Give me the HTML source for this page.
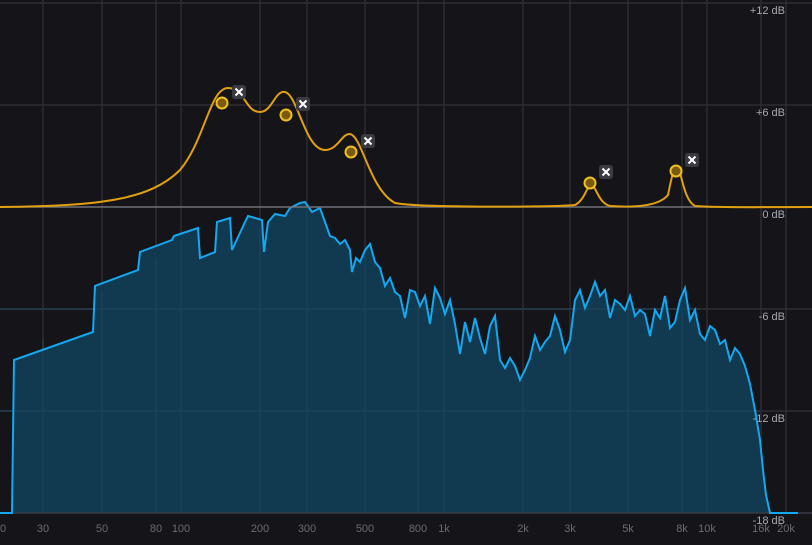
<!DOCTYPE html>
<html><head><style>
html,body{margin:0;padding:0;background:#141419;width:812px;height:545px;overflow:hidden}
svg{display:block}
text{font-family:"Liberation Sans",sans-serif;font-size:11px;fill:#6a6a72}
</style></head><body>
<svg width="812" height="545" viewBox="0 0 812 545">
<rect width="812" height="545" fill="#141419"/>
<g stroke="#2c2c33" stroke-width="1.5">
<line x1="43" y1="0" x2="43" y2="513"/><line x1="102" y1="0" x2="102" y2="513"/><line x1="156" y1="0" x2="156" y2="513"/><line x1="181" y1="0" x2="181" y2="513"/><line x1="260" y1="0" x2="260" y2="513"/><line x1="307" y1="0" x2="307" y2="513"/><line x1="365" y1="0" x2="365" y2="513"/><line x1="418" y1="0" x2="418" y2="513"/><line x1="444" y1="0" x2="444" y2="513"/><line x1="523" y1="0" x2="523" y2="513"/><line x1="570" y1="0" x2="570" y2="513"/><line x1="628" y1="0" x2="628" y2="513"/><line x1="682" y1="0" x2="682" y2="513"/><line x1="707" y1="0" x2="707" y2="513"/><line x1="761" y1="0" x2="761" y2="513"/><line x1="786" y1="0" x2="786" y2="513"/>
<line x1="0" y1="3" x2="812" y2="3"/><line x1="0" y1="105" x2="812" y2="105"/><line x1="0" y1="309" x2="812" y2="309"/><line x1="0" y1="411" x2="812" y2="411"/>
</g>
<path d="M0,513 L12,513 L14,360 L93,332 L95,286 L138,270 L140,252 L172,240 L174,236 L198,228 L200,258 L215,252 L217,222 L230,218 L232,250 L245,222 L248,216 L262,220 L264,252 L268,222 L275,214 L285,216 L290,208 L300,203 L305,202 L312,212 L320,208 L325,222 L330,236 L335,238 L340,244 L345,240 L350,250 L352,272 L356,258 L360,262 L365,250 L370,244 L375,262 L380,268 L385,286 L390,278 L395,292 L400,296 L405,318 L410,290 L415,292 L420,306 L425,296 L430,324 L435,288 L440,298 L445,314 L450,300 L455,324 L460,354 L465,322 L470,342 L475,318 L480,338 L485,354 L490,326 L495,316 L500,360 L505,368 L510,358 L515,366 L520,380 L525,370 L530,358 L535,336 L540,350 L545,342 L550,336 L555,316 L560,330 L565,352 L570,340 L575,300 L580,290 L585,308 L590,296 L595,282 L600,296 L605,290 L610,318 L615,300 L620,304 L625,310 L630,296 L635,316 L640,310 L645,314 L650,336 L655,310 L660,318 L665,296 L670,328 L675,322 L680,300 L685,288 L690,320 L695,310 L700,334 L705,340 L710,326 L715,330 L720,344 L725,340 L730,360 L735,348 L740,354 L745,366 L750,384 L755,410 L760,440 L763,470 L766,495 L770,513 L786,513 Z" fill="#113a50" stroke="none"/>
<g stroke="#1f4a60" stroke-width="1.5" opacity="0.6">
<line x1="43" y1="340" x2="43" y2="513"/><line x1="102" y1="290" x2="102" y2="513"/><line x1="156" y1="260" x2="156" y2="513"/><line x1="181" y1="240" x2="181" y2="513"/><line x1="260" y1="230" x2="260" y2="513"/><line x1="307" y1="210" x2="307" y2="513"/><line x1="365" y1="250" x2="365" y2="513"/><line x1="418" y1="300" x2="418" y2="513"/><line x1="444" y1="300" x2="444" y2="513"/><line x1="523" y1="380" x2="523" y2="513"/><line x1="570" y1="340" x2="570" y2="513"/><line x1="628" y1="310" x2="628" y2="513"/><line x1="682" y1="310" x2="682" y2="513"/><line x1="707" y1="340" x2="707" y2="513"/><line x1="0" y1="411" x2="760" y2="411"/><line x1="0" y1="309" x2="700" y2="309"/>
</g>
<line x1="0" y1="513" x2="812" y2="513" stroke="#3a3a42" stroke-width="1.5"/>
<path d="M0,513 L12,513 L14,360 L93,332 L95,286 L138,270 L140,252 L172,240 L174,236 L198,228 L200,258 L215,252 L217,222 L230,218 L232,250 L245,222 L248,216 L262,220 L264,252 L268,222 L275,214 L285,216 L290,208 L300,203 L305,202 L312,212 L320,208 L325,222 L330,236 L335,238 L340,244 L345,240 L350,250 L352,272 L356,258 L360,262 L365,250 L370,244 L375,262 L380,268 L385,286 L390,278 L395,292 L400,296 L405,318 L410,290 L415,292 L420,306 L425,296 L430,324 L435,288 L440,298 L445,314 L450,300 L455,324 L460,354 L465,322 L470,342 L475,318 L480,338 L485,354 L490,326 L495,316 L500,360 L505,368 L510,358 L515,366 L520,380 L525,370 L530,358 L535,336 L540,350 L545,342 L550,336 L555,316 L560,330 L565,352 L570,340 L575,300 L580,290 L585,308 L590,296 L595,282 L600,296 L605,290 L610,318 L615,300 L620,304 L625,310 L630,296 L635,316 L640,310 L645,314 L650,336 L655,310 L660,318 L665,296 L670,328 L675,322 L680,300 L685,288 L690,320 L695,310 L700,334 L705,340 L710,326 L715,330 L720,344 L725,340 L730,360 L735,348 L740,354 L745,366 L750,384 L755,410 L760,440 L763,470 L766,495 L770,513 L798,513" fill="none" stroke="#14a8f0" stroke-width="2"/>
<line x1="0" y1="207" x2="812" y2="207" stroke="#707078" stroke-width="1.5"/>
<path d="M0,207 C100,206 150,200 180,170 C205,140 210,88 228,88 C245,88 245,112 260,112 C272,112 275,90 285,92 C298,95 305,150 325,150 C338,150 342,133 350,134 C362,136 370,190 395,203 C420,208 560,207 575,205 C585,200 587,185 591,185 C596,185 598,203 610,206 C640,208 660,205 668,195 C672,175 674,167 677,167 C681,167 683,200 695,206 C720,208 760,207 812,207" fill="none" stroke="#e0a010" stroke-width="2"/>
<g fill="#7a5a10" stroke="#f0c020" stroke-width="2">
<circle cx="222" cy="103" r="5.5"/><circle cx="286" cy="115" r="5.5"/><circle cx="351" cy="152" r="5.5"/><circle cx="590" cy="183" r="5.5"/><circle cx="676" cy="171" r="5.5"/>
</g>
<g>
<g transform="translate(239,92)"><rect x="-7" y="-7" width="14" height="14" rx="3" fill="#3a3a42"/><path d="M-3.5,-3.5L3.5,3.5M3.5,-3.5L-3.5,3.5" stroke="#fff" stroke-width="2"/></g>
<g transform="translate(303,104)"><rect x="-7" y="-7" width="14" height="14" rx="3" fill="#3a3a42"/><path d="M-3.5,-3.5L3.5,3.5M3.5,-3.5L-3.5,3.5" stroke="#fff" stroke-width="2"/></g>
<g transform="translate(368,141)"><rect x="-7" y="-7" width="14" height="14" rx="3" fill="#3a3a42"/><path d="M-3.5,-3.5L3.5,3.5M3.5,-3.5L-3.5,3.5" stroke="#fff" stroke-width="2"/></g>
<g transform="translate(606,172)"><rect x="-7" y="-7" width="14" height="14" rx="3" fill="#3a3a42"/><path d="M-3.5,-3.5L3.5,3.5M3.5,-3.5L-3.5,3.5" stroke="#fff" stroke-width="2"/></g>
<g transform="translate(692,160)"><rect x="-7" y="-7" width="14" height="14" rx="3" fill="#3a3a42"/><path d="M-3.5,-3.5L3.5,3.5M3.5,-3.5L-3.5,3.5" stroke="#fff" stroke-width="2"/></g>
</g>
<g text-anchor="end">
<text x="785" y="14" style="fill:#a8a8b0">+12 dB</text><text x="785" y="116" style="fill:#a8a8b0">+6 dB</text><text x="785" y="218" style="fill:#a8a8b0">0 dB</text><text x="785" y="320" style="fill:#a8a8b0">-6 dB</text><text x="785" y="422" style="fill:#a8a8b0">-12 dB</text><text x="785" y="524" style="fill:#a8a8b0">-18 dB</text>
</g>
<g text-anchor="middle">
<text x="0" y="532">20</text><text x="43" y="532">30</text><text x="102" y="532">50</text><text x="156" y="532">80</text><text x="181" y="532">100</text><text x="260" y="532">200</text><text x="307" y="532">300</text><text x="365" y="532">500</text><text x="418" y="532">800</text><text x="444" y="532">1k</text><text x="523" y="532">2k</text><text x="570" y="532">3k</text><text x="628" y="532">5k</text><text x="682" y="532">8k</text><text x="707" y="532">10k</text><text x="761" y="532">16k</text><text x="786" y="532">20k</text>
</g>
</svg>
</body></html>
